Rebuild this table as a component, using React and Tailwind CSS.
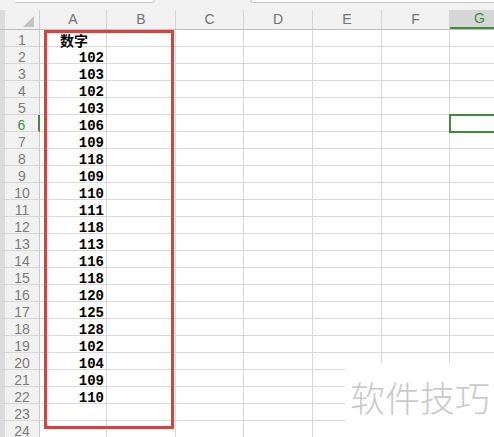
const cols = [
  { key: 'A', w: 'w-[67px]' },
  { key: 'B', w: 'w-[69px]' },
  { key: 'C', w: 'w-[68px]' },
  { key: 'D', w: 'w-[69px]' },
  { key: 'E', w: 'w-[69px]' },
  { key: 'F', w: 'w-[68px]' },
  { key: 'G', w: 'w-[60px]' },
]

const values = ['数字', 102, 103, 102, 103, 106, 109, 118, 109, 110, 111, 118, 113, 116, 118, 120, 125, 128, 102, 104, 109, 110, '', '']

const App = () => {
  return (
    <div className="relative w-[494px] h-[437px] overflow-hidden bg-white" style={{ fontFamily: '"Liberation Sans", "Noto Sans CJK SC", sans-serif' }}>
      {/* top toolbar edge */}
      <div className="flex h-[10px] bg-[#f1f1f1]">
        <div className="ml-[15px] w-[140px] h-[3px] bg-white border-b border-r border-[#c6c6c6] rounded-br-[3px]"></div>
        <div className="ml-[95px] flex-1 h-[3px] bg-white border-b border-l border-[#c6c6c6] rounded-bl-[3px]"></div>
      </div>

      {/* column header */}
      <div className="flex h-[20px] bg-[#f1f1f1] border-b border-[#bdbdbd]">
        <div className="w-[40px] shrink-0 flex items-end justify-end pr-[5px] pb-[2px] border-r border-[#d0d0d0] border-l-[5px] border-l-[#dcdcdc]">
          <div className="w-0 h-0 border-l-[11px] border-l-transparent border-b-[11px] border-b-[#c3c3c3]"></div>
        </div>
        {cols.map((c) => (
          <div
            key={c.key}
            className={`${c.w} shrink-0 flex items-center justify-center text-[14px] border-r border-[#d4d4d4] ${c.key === 'G' ? 'bg-[#d6d6d6] text-[#3c8f3c] border-b-2 border-b-[#3c8f3c]' : 'text-[#737373]'}`}
          >
            {c.key}
          </div>
        ))}
      </div>

      {/* rows */}
      {values.map((v, i) => {
        const n = i + 1
        const active = n === 6
        return (
          <div key={n} className="flex h-[17px]">
            <div
              className={`w-[40px] shrink-0 flex items-center justify-center text-[14px] leading-none bg-[#f1f1f1] border-b border-[#d8d8d8] border-l-[5px] border-l-[#dcdcdc] ${active ? 'text-[#3c8f3c] border-r-2 border-r-[#3c8f3c] bg-[#e2e2e2]' : 'text-[#7a7a7a] border-r border-r-[#c8c8c8]'}`}
            >
              <span className="mt-[3px]">{n}</span>
            </div>
            {cols.map((c) => (
              <div key={c.key} className={`${c.w} shrink-0 border-r border-b border-[#d9d9d9] flex items-center`}>
                {c.key === 'A' && v !== '' && (
                  typeof v === 'string' ? (
                    <span className="pl-[20px] mt-[3px] text-[14px] font-bold text-black leading-none" style={{ fontFamily: '"Noto Sans CJK SC", sans-serif' }}>{v}</span>
                  ) : (
                    <span className="ml-auto pr-[2px] mt-[5px] text-[14px] font-bold text-black leading-none" style={{ fontFamily: '"Liberation Mono", monospace' }}>{v}</span>
                  )
                )}
              </div>
            ))}
          </div>
        )
      })}

      {/* red highlight around A/B */}
      <div className="absolute left-[44px] top-[30px] w-[130px] h-[399px] border-[3px] border-[#d9413f]"></div>

      {/* active cell G6 */}
      <div className="absolute left-[449px] top-[114px] w-[60px] h-[19px] border-2 border-[#3c8f3c]"></div>

      {/* watermark */}
      <div className="absolute left-[345px] top-[363px] w-[149px] h-[74px] bg-white flex items-start justify-end pr-[4px] pt-[16px]">
        <span className="text-[35px] leading-none text-[#c9c9c9] font-light" style={{ fontFamily: '"Noto Sans CJK SC", sans-serif' }}>软件技巧</span>
      </div>
    </div>
  )
}

export default App
